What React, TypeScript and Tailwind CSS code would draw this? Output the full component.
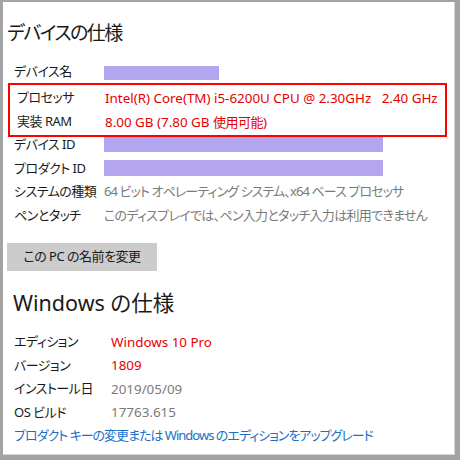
const jp = "font-['Noto_Sans','Noto_Sans_CJK_JP',sans-serif] [font-feature-settings:'palt']";

const Row = ({ label, children, labelW = "w-[90px]", h = "h-[23.5px]" }: { label: string; children: React.ReactNode; labelW?: string; h?: string }) => (
  <div className={`flex items-center ${h} pl-[7px] text-[13px] tracking-[-0.5px]`}>
    <div className={`${labelW} shrink-0 text-[#1a1a1a] whitespace-nowrap`}>{label}</div>
    <div className="flex-1 whitespace-nowrap">{children}</div>
  </div>
);

const Bar = ({ w, h }: { w: string; h: string }) => <div className={`${w} ${h} bg-[#b3a6ef]`} />;

export default function App() {
  return (
    <div className={`w-[460px] h-[460px] bg-[#a3a3a3] pt-[2px] pl-[3px] pr-[5px] pb-[5px] ${jp}`}>
      <div className="w-full h-full bg-white border-r border-b border-[#d6d6d6] px-[4px] pt-[17px]">
        <h1 className="h-7 flex items-center text-[19px] tracking-[-1.5px] text-[#1a1a1a] font-normal">デバイスの仕様</h1>

        <div className="mt-[13px]">
          <Row label="デバイス名" h="h-6">
            <div className="pt-px">
              <Bar w="w-[115px]" h="h-[14px]" />
            </div>
          </Row>
        </div>

        <div className="-mt-px ml-px w-[439px] border-2 border-[#ff0000] py-px">
          <Row label="プロセッサ" h="h-6" labelW="w-[88px]">
            <span className="text-[#e60000] text-[13.4px] tracking-normal">Intel(R) Core(TM) i5-6200U CPU @ 2.30GHz&nbsp;&nbsp; 2.40 GHz</span>
          </Row>
          <Row label="実装 RAM" h="h-6" labelW="w-[88px]">
            <span className="text-[#e60000] text-[13.4px] tracking-normal">8.00 GB (7.80 GB <span className="text-[13px] tracking-[-0.5px]">使用可能</span>)</span>
          </Row>
        </div>

        <div className="-mt-1">
          <Row label="デバイス ID">
            <Bar w="w-[279px]" h="h-[15px]" />
          </Row>
          <Row label="プロダクト ID">
            <Bar w="w-[279px]" h="h-[16px]" />
          </Row>
          <Row label="システムの種類">
            <span className="text-[#7a7a7a] tracking-[-0.9px]">64 ビット オペレーティング システム、x64 ベース プロセッサ</span>
          </Row>
          <Row label="ペンとタッチ">
            <span className="text-[#7a7a7a] tracking-[-0.7px]">このディスプレイでは、ペン入力とタッチ入力は利用できません</span>
          </Row>
        </div>

        <button className="mt-4 w-[150px] h-7 bg-[#cccccc] text-[13px] tracking-[-0.5px] text-[#1a1a1a] flex items-center justify-center">
          この PC の名前を変更
        </button>

        <h2 className="mt-[18px] pl-[6px] h-7 flex items-center text-[21.5px] text-[#1a1a1a] font-normal">Windows の仕様</h2>

        <div className="mt-[13px]">
          <Row label="エディション" labelW="w-[97px]">
            <span className="text-[#e60000] text-[13.4px] tracking-normal">Windows 10 Pro</span>
          </Row>
          <Row label="バージョン" labelW="w-[97px]">
            <span className="text-[#e60000] text-[13.4px] tracking-normal">1809</span>
          </Row>
          <Row label="インストール日" labelW="w-[97px]">
            <span className="text-[#7a7a7a] text-[13.4px] tracking-normal">2019/05/09</span>
          </Row>
          <Row label="OS ビルド" labelW="w-[97px]">
            <span className="text-[#7a7a7a] text-[13.4px] tracking-normal">17763.615</span>
          </Row>
          <div className="h-[23.5px] flex items-center pl-[7px] text-[13px] tracking-[-1px] text-[#1a6fc6] whitespace-nowrap">
            プロダクト キーの変更または Windows のエディションをアップグレード
          </div>
        </div>
      </div>
    </div>
  );
}
